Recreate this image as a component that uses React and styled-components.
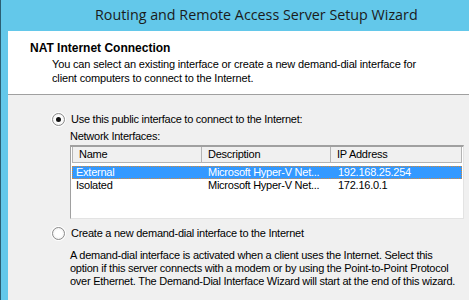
import React from 'react'
import styled, { createGlobalStyle } from 'styled-components';

const GlobalStyle = createGlobalStyle`
  html, body { margin: 0; padding: 0; }
  body {
    width: 469px;
    height: 300px;
    overflow: hidden;
    font-family: "Liberation Sans", Arial, sans-serif;
    font-size: 11px;
    letter-spacing: -0.25px;
    color: #000;
  }
`;

const rows = [
  { name: 'External', desc: 'Microsoft Hyper-V Net...', ip: '192.168.25.254', selected: true },
  { name: 'Isolated', desc: 'Microsoft Hyper-V Net...', ip: '172.16.0.1' },
];

const App = () => {
  return (
    <Window>
      <GlobalStyle />
      <TitleBar>Routing and Remote Access Server Setup Wizard</TitleBar>
      <Frame>
        <Header>
          <h1>NAT Internet Connection</h1>
          <p>You can select an existing interface or create a new demand-dial interface for<br />client computers to connect to the Internet.</p>
        </Header>
        <Body>
          <Option>
            <Radio checked />
            <span>Use this public interface to connect to the Internet:</span>
          </Option>
          <Indent>
            <Caption>Network Interfaces:</Caption>
            <List>
              <HeadRow>
                <HeadCell $w={130}>Name</HeadCell>
                <HeadCell $w={130}>Description</HeadCell>
                <HeadCell $w={131}>IP Address</HeadCell>
              </HeadRow>
              {rows.map(r => (
                <Row key={r.name} $selected={r.selected}>
                  <Cell $w={132}>{r.name}</Cell>
                  <Cell $w={130}>{r.desc}</Cell>
                  <Cell $w={124}>{r.ip}</Cell>
                </Row>
              ))}
            </List>
          </Indent>
          <Option $top={7}>
            <Radio />
            <span>Create a new demand-dial interface to the Internet</span>
          </Option>
          <Indent>
            <Note>
              A demand-dial interface is activated when a client uses the Internet. Select this<br />
              option if this server connects with a modem or by using the Point-to-Point Protocol<br />
              over Ethernet. The Demand-Dial Interface Wizard will start at the end of this wizard.
            </Note>
          </Indent>
        </Body>
      </Frame>
    </Window>
  )
}

export default App;

const Window = styled.div`
width: 469px;
height: 300px;
display: flex;
flex-direction: column;
background: #63c8ea;
border-left: 1px solid #2b5f73;
box-sizing: border-box;
`;

const TitleBar = styled.div`
height: 31px;
flex-shrink: 0;
padding-left: 94px;
line-height: 30px;
font-family: "Open Sans", "Noto Sans", sans-serif;
font-size: 14.3px;
letter-spacing: 0;
color: #1b1b1b;
`;

const Frame = styled.div`
flex: 1;
margin-left: 7px;
display: flex;
flex-direction: column;
background: #f0f0f0;
`;

const Header = styled.div`
height: 64px;
flex-shrink: 0;
box-sizing: border-box;
padding: 10px 0 0 22px;
background: #fff;
border-bottom: 1px solid #a0a0a0;
h1{
  margin: 0;
  font-size: 12px;
  font-weight: 700;
  letter-spacing: 0;
  line-height: 14px;
}
p{
  margin: 2px 0 0 22px;
  line-height: 14px;
  white-space: nowrap;
  letter-spacing: -0.15px;
}
`;

const Body = styled.div`
padding: 17px 0 0 44px;
`;

const Option = styled.label`
display: flex;
align-items: center;
gap: 6px;
height: 14px;
margin-top: ${p => p.$top || 0}px;
white-space: nowrap;
`;

const Radio = styled.span`
width: 11px;
height: 11px;
border-radius: 50%;
border: 1px solid #8c8c8c;
background: radial-gradient(circle, #fff 0 40%, #e6e6e6 100%);
box-shadow: 0 0 0 1px #fff;
position: relative;
flex-shrink: 0;
&::after{
  content: '';
  display: ${p => (p.checked ? 'block' : 'none')};
  position: absolute;
  left: 3px;
  top: 3px;
  width: 5px;
  height: 5px;
  border-radius: 50%;
  background: #111;
}
`;

const Indent = styled.div`
padding-left: 18px;
`;

const Caption = styled.div`
line-height: 14px;
margin-top: 3px;
`;

const List = styled.div`
width: 394px;
height: 74px;
box-sizing: border-box;
margin-top: 2px;
background: #fff;
border: 1px solid #a0a0a0;
border-top-width: 2px;
border-right-color: #e3e3e3;
border-bottom-color: #e3e3e3;
padding: 0 1px;
`;

const HeadRow = styled.div`
display: flex;
height: 15px;
border: 1px solid #b4b4b4;
border-top: 0;
background: #f0f0f0;
`;

const HeadCell = styled.div`
width: ${p => p.$w}px;
box-sizing: border-box;
padding-left: 6px;
line-height: 15px;
border-right: 1px solid #b4b4b4;
&:last-child{ border-right: 0; }
`;

const Row = styled.div`
display: flex;
height: 13px;
margin-top: ${p => (p.$selected ? 3 : 0)}px;
background: ${p => (p.$selected ? '#3399ff' : 'transparent')};
color: ${p => (p.$selected ? '#fff' : '#000')};
outline: ${p => (p.$selected ? '1px dotted #d58a3a' : 'none')};
outline-offset: -1px;
`;

const Cell = styled.div`
width: ${p => p.$w}px;
box-sizing: border-box;
padding-left: 4px;
line-height: 13px;
white-space: nowrap;
`;

const Note = styled.p`
margin: 9px 0 0;
line-height: 13px;
white-space: nowrap;
`;
